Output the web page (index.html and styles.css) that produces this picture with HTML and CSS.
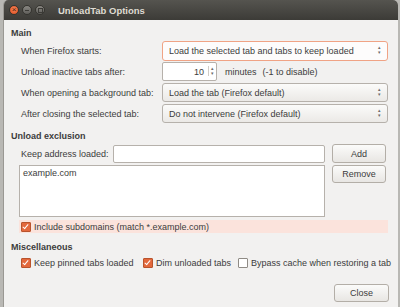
FILE: index.html
```
<!DOCTYPE html>
<html lang="en">
<head>
    <meta charset="UTF-8">
    <title>UnloadTab Options</title>
    <link rel="stylesheet" href="styles.css">
</head>
<body>
    <div class="window">
        <div class="titlebar">
            <span class="wbtn close">&times;</span>
            <span class="wbtn min"></span>
            <span class="wbtn max"></span>
            <span class="title">UnloadTab Options</span>
        </div>
        <div class="content">
            <h3 class="first">Main</h3>
            <div class="main-grid">
                <label>When Firefox starts:</label>
                <div class="combo focused">Load the selected tab and tabs to keep loaded<span class="arrows">&#9652;<br>&#9662;</span></div>
                <label>Unload inactive tabs after:</label>
                <div class="spin-row">
                    <div class="spin"><span class="spin-value">10</span><span class="arrows">&#9652;<br>&#9662;</span></div>
                    <span class="minutes">minutes</span>
                    <span>(-1 to disable)</span>
                </div>
                <label>When opening a background tab:</label>
                <div class="combo">Load the tab (Firefox default)<span class="arrows">&#9652;<br>&#9662;</span></div>
                <label>After closing the selected tab:</label>
                <div class="combo">Do not intervene (Firefox default)<span class="arrows">&#9652;<br>&#9662;</span></div>
            </div>

            <h3>Unload exclusion</h3>
            <div class="excl-grid">
                <div class="address-row">
                    <label>Keep address loaded:</label>
                    <div class="entry"></div>
                </div>
                <button>Add</button>
                <div class="list">example.com</div>
                <button class="remove">Remove</button>
            </div>
            <div class="check-row highlight">
                <span class="check on"></span>Include subdomains (match *.example.com)
            </div>

            <h3 class="misc-title">Miscellaneous</h3>
            <div class="misc">
                <div class="check-row"><span class="check on"></span>Keep pinned tabs loaded</div>
                <div class="check-row"><span class="check on"></span>Dim unloaded tabs</div>
                <div class="check-row"><span class="check"></span>Bypass cache when restoring a tab</div>
            </div>

            <div class="footer">
                <button class="close-btn">Close</button>
            </div>
        </div>
    </div>
</body>
</html>
```

FILE: styles.css
```
body, html {
    margin: 0;
    background: #b9b8b4;
    font-family: 'Liberation Sans', Arial, sans-serif;
    font-size: 9px;
    color: #3c3c3c;
}
.window {
    margin-left: 3px;
    width: 395px;
    height: 307px;
    background: #f2f1f0;
    border-left: 1px solid #9a9893;
    box-sizing: border-box;
    border-radius: 5px 5px 0 0;
    overflow: hidden;
}
.titlebar {
    height: 20px;
    background: linear-gradient(#55544f, #3c3b37);
    display: flex;
    align-items: center;
    padding-left: 5px;
    gap: 3px;
}
.wbtn {
    width: 8px;
    height: 8px;
    border-radius: 50%;
    background: linear-gradient(#8a8883, #5f5e5a);
    border: 1px solid #35342f;
    display: flex;
    align-items: center;
    justify-content: center;
    font-size: 8px;
    line-height: 1;
    color: #4a1e0c;
}
.wbtn.close {
    background: radial-gradient(circle at 50% 40%, #f7865a, #dc4a1c);
}
.wbtn.min::after {
    content: '';
    width: 4px;
    height: 1px;
    background: #3c3b37;
}
.wbtn.max::after {
    content: '';
    width: 3px;
    height: 3px;
    border: 1px solid #3c3b37;
}
.title {
    margin-left: 10px;
    color: #dfdbd2;
    font-weight: bold;
    font-size: 9.5px;
}
.content {
    padding: 0 9px 0 7px;
}
h3 {
    margin: 7px 0 2px 0;
    font-size: 9px;
    line-height: 12px;
    font-weight: bold;
    color: #3c3c3c;
}
h3.first {
    margin-top: 7px;
}
h3.misc-title {
    margin-top: 8px;
    margin-bottom: 3px;
}
.main-grid {
    display: grid;
    grid-template-columns: 141px 226px;
    grid-auto-rows: 19px;
    row-gap: 2px;
    align-items: center;
    padding-left: 10px;
}
.combo {
    height: 17px;
    border: 1px solid #b6b1ab;
    border-radius: 3px;
    background: linear-gradient(#fbfbfa, #ebe9e6);
    display: flex;
    align-items: center;
    padding-left: 6px;
    position: relative;
}
.combo.focused {
    height: 18px;
    border-color: #f0a385;
    background: #fdfcfc;
}
.arrows {
    position: absolute;
    right: 6px;
    top: 3px;
    font-size: 5px;
    line-height: 5px;
    color: #6c6c6c;
    text-align: center;
}
.spin-row {
    display: flex;
    align-items: center;
}
.spin {
    width: 53px;
    height: 17px;
    border: 1px solid #b6b1ab;
    border-radius: 2px;
    background: #fff;
    display: flex;
    align-items: center;
    position: relative;
}
.spin-value {
    width: 41px;
    text-align: right;
}
.spin .arrows {
    right: 1px;
    border-left: 1px solid #d0ccc6;
    padding-left: 2px;
    padding-right: 1px;
}
.minutes {
    margin: 0 6px 0 8px;
}
.excl-grid {
    display: grid;
    grid-template-columns: 306px 54px;
    column-gap: 7px;
    row-gap: 2px;
    padding-left: 8px;
}
.address-row {
    display: flex;
    align-items: center;
    padding-left: 2px;
}
.address-row label {
    width: 92px;
    flex: none;
}
.entry {
    flex: 1;
    height: 16px;
    border: 1px solid #b6b1ab;
    border-radius: 2px;
    background: #fff;
}
button {
    height: 19px;
    font-family: inherit;
    font-size: 9px;
    color: #3c3c3c;
    border: 1px solid #b3aea7;
    border-radius: 3px;
    background: linear-gradient(#fbfbfa, #e8e6e3);
    padding: 0;
}
.remove {
    height: 18px;
}
.list {
    height: 52px;
    box-sizing: border-box;
    border: 1px solid #b6b1ab;
    background: #fff;
    padding: 2px 3px;
}
.check-row {
    display: flex;
    align-items: center;
    gap: 3px;
    height: 13px;
    white-space: nowrap;
}
.highlight {
    margin: 3px 0 0 8px;
    width: 369px;
    background: #fbe3dc;
    padding-left: 2px;
    box-sizing: border-box;
}
.check {
    width: 8px;
    height: 8px;
    border: 1px solid #8f8b85;
    border-radius: 1px;
    background: #fff;
    position: relative;
}
.check.on {
    background: #e3683c;
    border-color: #b9532c;
}
.check.on::after {
    content: '';
    position: absolute;
    left: 2px;
    top: 0;
    width: 2px;
    height: 5px;
    border: solid #fff;
    border-width: 0 1.5px 1.5px 0;
    transform: rotate(40deg);
}
.misc {
    display: grid;
    grid-template-columns: 122px 95px auto;
    padding-left: 10px;
}
.footer {
    display: flex;
    justify-content: flex-end;
    margin-top: 15px;
}
.close-btn {
    width: 55px;
    height: 18px;
}
```
